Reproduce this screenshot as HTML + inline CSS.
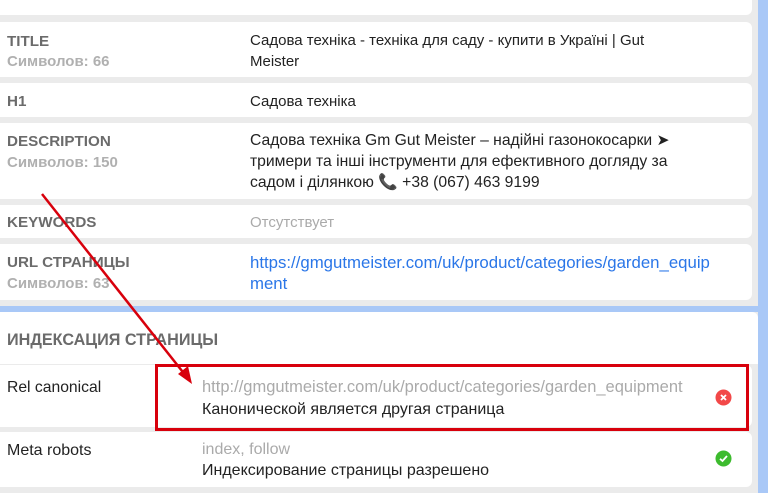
<!DOCTYPE html>
<html><head><meta charset="utf-8"><style>
*{margin:0;padding:0;box-sizing:border-box}
body{width:768px;height:493px;overflow:hidden;background:#ebebeb;font-family:"Liberation Sans",sans-serif;position:relative}
.abs{position:absolute}
.row{position:absolute;left:0;width:752px;background:#fff;border-radius:0 6px 6px 0}
.lab{position:absolute;left:7px;font-weight:bold;color:#6b6b6b;font-size:15.2px;white-space:nowrap}
.sub{position:absolute;left:7px;color:#b0b0b0;font-size:15px;font-weight:bold;white-space:nowrap}
.val{position:absolute;left:250px;color:#222;font-size:15px;line-height:21px;white-space:nowrap}
.lab2{position:absolute;left:7px;color:#222;font-size:15.7px;white-space:nowrap}
.v2{position:absolute;left:202px;font-size:16px;line-height:21px;white-space:nowrap}
</style></head><body>
<div class="abs" style="left:0;top:0;width:752px;height:15px;background:#fff;border-radius:0 0 6px 0"></div>
<div class="abs" style="left:758px;top:0;width:10px;height:493px;background:#a9c8f7"></div>
<div class="abs" style="left:0;top:306px;width:768px;height:6px;background:#a9c8f7"></div>

<div class="row" style="top:22px;height:55px"><div class="lab" style="top:11px">TITLE</div><div class="sub" style="top:31px">Символов: 66</div><div class="val" style="top:8px">Садова техніка - техніка для саду - купити в Україні | Gut<br>Meister</div></div>
<div class="row" style="top:83px;height:34px"><div class="lab" style="top:10px">H1</div><div class="val" style="top:8px">Садова техніка</div></div>
<div class="row" style="top:123px;height:76px"><div class="lab" style="top:10px">DESCRIPTION</div><div class="sub" style="top:31px">Символов: 150</div><div class="val" style="top:7px;font-size:15.7px">Садова техніка Gm Gut Meister – надійні газонокосарки ➤<br>тримери та інші інструменти для ефективного догляду за<br>садом і ділянкою <span style="color:#c0282d">📞</span> +38 (067) 463 9199</div></div>
<div class="row" style="top:205px;height:33px"><div class="lab" style="top:9px">KEYWORDS</div><div class="val" style="top:7px;color:#aaa">Отсутствует</div></div>
<div class="row" style="top:244px;height:56px"><div class="lab" style="top:10px">URL СТРАНИЦЫ</div><div class="sub" style="top:31px">Символов: 63</div><div class="val" style="top:8px;color:#2a76e8;font-size:16.8px">https://gmgutmeister.com/uk/product/categories/garden_equip<br>ment</div></div>

<div class="abs" style="left:0;top:312px;width:758px;height:52px;background:#fff;border-radius:0 6px 0 0"></div>
<div class="lab" style="top:331px;font-size:16.2px">ИНДЕКСАЦИЯ СТРАНИЦЫ</div>

<div class="row" style="top:365px;height:62px"><div class="lab2" style="top:14px">Rel canonical</div><div class="v2" style="top:12px;color:#aaa;font-size:16.5px">http://gmgutmeister.com/uk/product/categories/garden_equipment</div><div class="v2" style="top:34px;color:#222">Канонической является другая страница</div>
<svg class="abs" style="left:715px;top:24px" width="17" height="17"><circle cx="8.5" cy="8.5" r="8" fill="#f24848"/><path d="M6 6L11 11M11 6L6 11" stroke="#fff" stroke-width="1.8"/></svg></div>
<div class="row" style="top:432px;height:55px"><div class="lab2" style="top:10px;font-size:16px">Meta robots</div><div class="v2" style="top:7px;color:#aaa">index, follow</div><div class="v2" style="top:28px;color:#222">Индексирование страницы разрешено</div>
<svg class="abs" style="left:715px;top:18px" width="17" height="17"><circle cx="8.5" cy="8.5" r="8" fill="#3dbb2e"/><path d="M5 8.8L7.5 11L12 6" stroke="#fff" stroke-width="1.8" fill="none"/></svg></div>

<div class="abs" style="left:155px;top:364px;width:594px;height:67px;border:3px solid #d8000c"></div>
<svg class="abs" style="left:0;top:0" width="768" height="493"><line x1="42" y1="194" x2="186" y2="376" stroke="#d8000c" stroke-width="2.5"/><path d="M192 384L178 374L188 366Z" fill="#d8000c"/></svg>
</body></html>
